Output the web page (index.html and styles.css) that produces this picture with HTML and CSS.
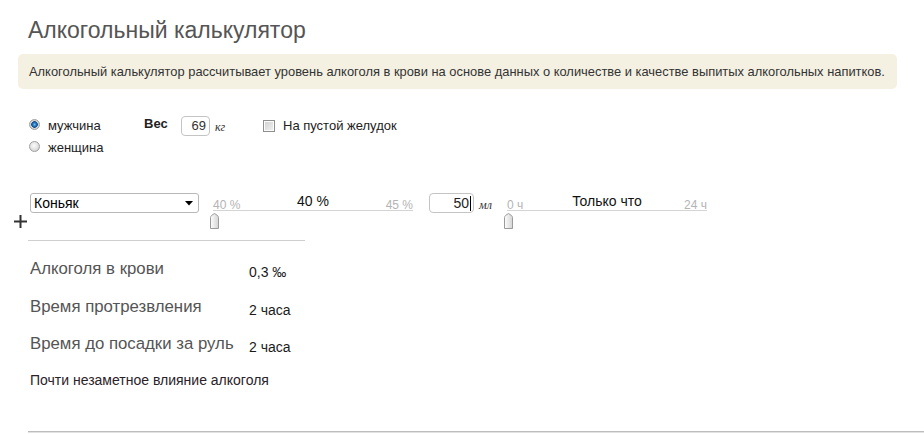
FILE: index.html
```html
<!DOCTYPE html>
<html lang="ru">
<head>
<meta charset="utf-8">
<title>Алкогольный калькулятор</title>
<link rel="stylesheet" href="styles.css">
</head>
<body>
<div class="page">
  <h1 class="title">Алкогольный калькулятор</h1>
  <div class="info">Алкогольный калькулятор рассчитывает уровень алкоголя в крови на основе данных о количестве и качестве выпитых алкогольных напитков.</div>

  <div class="params">
    <div class="gender">
      <label class="opt"><span class="radio checked"></span><span>мужчина</span></label>
      <label class="opt"><span class="radio"></span><span>женщина</span></label>
    </div>
    <div class="weight">
      <span class="weight-label">Вес</span>
      <span class="num-input weight-input">69</span>
      <span class="unit">кг</span>
    </div>
    <label class="stomach"><span class="checkbox"></span><span>На пустой желудок</span></label>
  </div>

  <div class="drink">
    <svg class="plus" width="13" height="13" viewBox="0 0 13 13"><rect x="0" y="5.5" width="13" height="2" fill="#333"/><rect x="5.5" y="0" width="2" height="13" fill="#333"/></svg>
    <div class="select"><span>Коньяк</span><svg width="8" height="5" viewBox="0 0 8 5"><path d="M0 0H8L4 4.5Z" fill="#000"/></svg></div>
    <div class="slider">
      <div class="scale">
        <span class="lim lim-min">40 %</span>
        <span class="cur">40 %</span>
        <span class="lim lim-max">45 %</span>
      </div>
      <svg class="handle" width="9" height="16" viewBox="0 0 9 16"><defs><linearGradient id="hg1" x1="0" y1="0" x2="1" y2="0"><stop offset="0" stop-color="#fdfdfd"/><stop offset="1" stop-color="#d4d4d4"/></linearGradient></defs><path d="M0.5 15.5V4.5Q0.5 3.5 1.5 2.5L4.5 0.5L7.5 2.5Q8.5 3.5 8.5 4.5V15.5Z" fill="url(#hg1)" stroke="#9a9a9a"/></svg>
    </div>
    <span class="num-input vol-input">50<span class="caret"></span></span>
    <span class="unit unit-ml">мл</span>
    <div class="slider">
      <div class="scale">
        <span class="lim lim-min">0 ч</span>
        <span class="cur">Только что</span>
        <span class="lim lim-max">24 ч</span>
      </div>
      <svg class="handle" width="9" height="16" viewBox="0 0 9 16"><defs><linearGradient id="hg2" x1="0" y1="0" x2="1" y2="0"><stop offset="0" stop-color="#fdfdfd"/><stop offset="1" stop-color="#d4d4d4"/></linearGradient></defs><path d="M0.5 15.5V4.5Q0.5 3.5 1.5 2.5L4.5 0.5L7.5 2.5Q8.5 3.5 8.5 4.5V15.5Z" fill="url(#hg2)" stroke="#9a9a9a"/></svg>
    </div>
  </div>

  <div class="sep"></div>

  <div class="results">
    <div class="row"><span class="r-label">Алкоголя в крови</span><span class="r-value">0,3 ‰</span></div>
    <div class="row"><span class="r-label">Время протрезвления</span><span class="r-value">2 часа</span></div>
    <div class="row"><span class="r-label">Время до посадки за руль</span><span class="r-value">2 часа</span></div>
  </div>
  <p class="verdict">Почти незаметное влияние алкоголя</p>

  <div class="bottom-line"></div>
</div>
</body>
</html>
```

FILE: styles.css
```css
html, body {
  margin: 0;
  padding: 0;
  background: #fff;
}
body {
  font-family: "Liberation Sans", Arial, sans-serif;
  color: #222;
  overflow: hidden;
}
.page {
  padding: 16px 27px 0 18px;
}
.title {
  margin: 0 0 10px 10px;
  font-size: 23px;
  line-height: 28px;
  font-weight: normal;
  color: #555;
}
.info {
  background: #f4f1e3;
  border-radius: 5px;
  padding: 10px 11px;
  font-size: 12.9px;
  line-height: 15px;
  color: #333;
  white-space: nowrap;
}

/* params */
.params {
  margin-top: 26px;
  display: flex;
  align-items: flex-start;
  font-size: 13px;
  color: #222;
}
.gender {
  width: 115px;
  padding-left: 11px;
  display: flex;
  flex-direction: column;
}
.opt {
  display: flex;
  align-items: flex-start;
  line-height: 22px;
  height: 22px;
}
.radio {
  width: 11px;
  height: 11px;
  box-sizing: border-box;
  border-radius: 50%;
  border: 1px solid #a0a0a0;
  background: radial-gradient(circle at 45% 40%, #fbfbfb 0, #e6e6e6 45%, #c4c4c4 100%);
  margin: 4px 8px 0 0;
}
.radio.checked {
  background: radial-gradient(circle at 50% 50%, #6fc0f0 0, #2172b8 1.8px, #124f8c 3px, #d6d6d6 3.6px, #c2c2c2 100%);
}
.weight {
  width: 119px;
  display: flex;
  align-items: flex-start;
}
.weight-label {
  font-weight: bold;
  line-height: 16px;
  margin-top: 1px;
  width: 37px;
}
.num-input {
  box-sizing: border-box;
  height: 20px;
  border: 1px solid #c4c4c4;
  border-radius: 4px;
  background: #fff;
  text-align: right;
  font-size: 13px;
  line-height: 18px;
  color: #333;
  display: flex;
  justify-content: flex-end;
  align-items: center;
}
.weight-input {
  width: 29px;
  padding-right: 3px;
  margin-top: 1px;
}
.unit {
  font-family: "Liberation Serif", "Times New Roman", serif;
  font-style: italic;
  font-size: 12px;
  color: #333;
}
.weight .unit {
  margin-left: 5px;
  line-height: 16px;
  margin-top: 4px;
}
.stomach {
  display: flex;
  align-items: flex-start;
  line-height: 22px;
}
.checkbox {
  width: 12px;
  height: 12px;
  box-sizing: border-box;
  border: 1px solid #8e8e8e;
  box-shadow: inset 0 0 0 1px #fbfbfb;
  background: linear-gradient(135deg, #cfcfcf, #f2f2f2);
  margin: 5px 8px 0 0;
}

/* drink row */
.drink {
  margin-top: 34px;
  margin-left: -4px;
  display: flex;
  align-items: flex-start;
}
.plus {
  align-self: flex-end;
  margin-right: 3px;
  margin-bottom: 1px;
}
.select {
  box-sizing: border-box;
  width: 169px;
  height: 20px;
  border: 1px solid #b8b8b8;
  border-radius: 3px;
  background: #fff;
  display: flex;
  align-items: center;
  justify-content: space-between;
  padding: 0 5px 0 3px;
  font-size: 14px;
  color: #000;
  margin-right: 14px;
}
.select svg {
  display: block;
}
.slider {
  width: 200px;
}
.scale {
  display: grid;
  grid-template-columns: 1fr auto 1fr;
  align-items: end;
  height: 17px;
  border-bottom: 1px solid #d4d4d4;
}
.lim {
  font-size: 12px;
  line-height: 12px;
  color: #b4b4b4;
}
.lim-min {
  justify-self: start;
}
.lim-max {
  justify-self: end;
}
.cur {
  font-size: 14px;
  line-height: 16px;
  padding-bottom: 2px;
  color: #111;
}
.handle {
  display: block;
  margin: 2px 0 0 -3px;
}
.vol-input {
  width: 45px;
  padding-right: 2px;
  margin-left: 16px;
  color: #222;
  font-size: 14px;
}
.caret {
  display: inline-block;
  width: 1px;
  height: 15px;
  background: #000;
  margin-left: 1px;
}
.unit-ml {
  width: 33px;
  box-sizing: border-box;
  padding-left: 5px;
  line-height: 16px;
  margin-top: 4px;
}

/* separator & results */
.sep {
  margin: 11px 0 0 10px;
  width: 277px;
  border-top: 1px solid #cfcfcf;
}
.results {
  margin-top: 18px;
  padding-left: 12px;
  display: flex;
  flex-direction: column;
  gap: 17.5px;
}
.row {
  display: flex;
  align-items: flex-end;
}
.r-label {
  width: 219px;
  font-size: 16.8px;
  line-height: 20px;
  color: #555;
}
.r-value {
  font-size: 14px;
  line-height: 14px;
  color: #1a1a1a;
}
.verdict {
  margin: 18px 0 0 12px;
  font-size: 14px;
  line-height: 16px;
  color: #2a2228;
}
.bottom-line {
  margin: 43px -27px 0 10px;
  border-top: 1px solid #bdbdbd;
  border-bottom: 1px solid #e2e2e2;
}
```
